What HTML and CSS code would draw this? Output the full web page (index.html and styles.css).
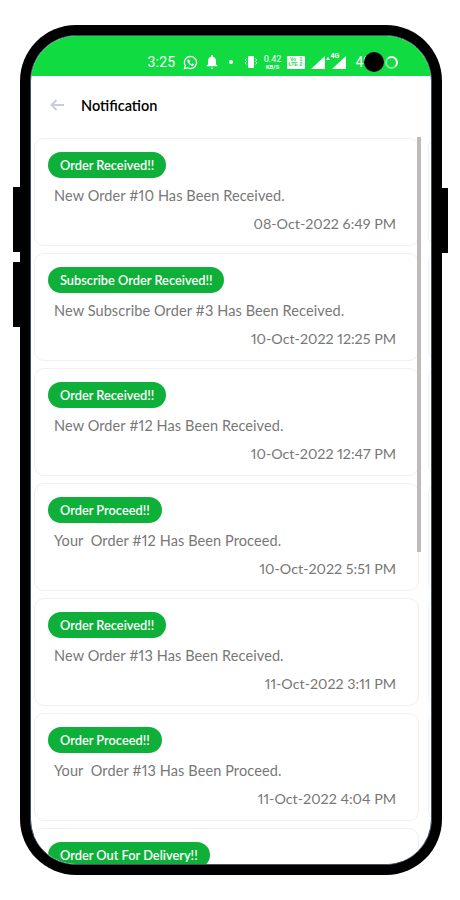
FILE: index.html

```html
<!DOCTYPE html>
<html lang="en">
<head>
    <meta charset="UTF-8">
    <meta name="viewport" content="width=device-width, initial-scale=1.0">
    <title>Notification</title>
    <link rel="stylesheet" href="styles.css">
</head>
<body>
    <div class="phone">
        <span class="side-btn vol-up"></span>
        <span class="side-btn vol-down"></span>
        <span class="side-btn power"></span>
        <span class="camera"></span>
        <div class="screen">
            <div class="status-bar">
                <span class="clock">3:25</span>
                <svg class="ic-wa" width="15" height="15" viewBox="0 0 24 24"><path d="M12 2.2a9.7 9.7 0 0 0-8.3 14.7L2.4 21.600l4.800-1.250A9.700 9.700 0 1 0 12 2.200z" fill="none" stroke="#fff" stroke-width="2"/><path d="M8.600 6.800c-.5 0-1.500.9-1.500 2.500 0 3 4.200 7.700 7.800 7.900 1.500 0 2.600-1 2.700-2.100 0-.4-2.200-1.600-2.600-1.500-.4.100-.9 1.200-1.300 1.200-1 0-3.400-2.200-3.500-3.200 0-.5.900-1 .9-1.400 0-.4-1.100-3.400-2.500-2.400z" fill="#fff"/></svg>
                <svg class="ic-bell" width="12" height="14" viewBox="0 0 12 14"><path d="M6 0c.6 0 1 .4 1 1v.7c1.800.4 3 2 3 3.900v3.600l1.500 1.500v.6H.5v-.6L2 9.200V5.600c0-1.900 1.200-3.500 3-3.900V1c0-.6.400-1 1-1zM4.700 12.700h2.600c0 .7-.6 1.300-1.300 1.300s-1.300-.6-1.300-1.300z" fill="#fff"/></svg>
                <span class="dot"></span>
                <svg class="ic-vib" width="14" height="14" viewBox="0 0 14 14"><rect x="4" y="1" width="6" height="12" rx="1" fill="#fff"/><path d="M2.500 3.500 1.200 5l1.300 1.500L1.200 8l1.300 1.500M11.500 3.500 12.800 5l-1.300 1.500L12.800 8l-1.300 1.500" fill="none" stroke="#fff" stroke-width=".8"/></svg>
                <span class="speed"><b>0.42</b><b class="unit">KB/S</b></span>
                <span class="volte"><i>Vo</i><i>1</i><i>LTE</i><i>2</i></span>
                <svg class="ic-sig" width="14" height="13" viewBox="0 0 14 13"><path d="M14 0v13H0z" fill="#fff"/></svg>
                <span class="sig-4g">
                    <svg width="14" height="13" viewBox="0 0 14 13"><path d="M14 0v13H0z" fill="#fff"/></svg>
                    <em>4G</em>
                    <u></u>
                </span>
                <span class="battery-num">49</span>
                <span class="ring"></span>
            </div>

            <header class="top-bar">
                <svg class="back" width="14" height="12" viewBox="0 0 14 12"><path d="M6.500 1 1.500 6l5 5M1.500 6H14" fill="none" stroke="#c9ccd9" stroke-width="2"/></svg>
                <h1>Notification</h1>
            </header>

            <div class="list">
                <div class="row">
                    <div class="card">
                        <span class="badge">Order Received!!</span>
                        <p class="msg">New Order #10 Has Been Received.</p>
                        <p class="date">08-Oct-2022 6:49 PM</p>
                    </div>
                    <div class="ghost"></div>
                </div>
                <div class="row">
                    <div class="card">
                        <span class="badge">Subscribe Order Received!!</span>
                        <p class="msg">New Subscribe Order #3 Has Been Received.</p>
                        <p class="date">10-Oct-2022 12:25 PM</p>
                    </div>
                    <div class="ghost"></div>
                </div>
                <div class="row">
                    <div class="card">
                        <span class="badge">Order Received!!</span>
                        <p class="msg">New Order #12 Has Been Received.</p>
                        <p class="date">10-Oct-2022 12:47 PM</p>
                    </div>
                    <div class="ghost"></div>
                </div>
                <div class="row">
                    <div class="card">
                        <span class="badge">Order Proceed!!</span>
                        <p class="msg">Your&nbsp; Order #12 Has Been Proceed.</p>
                        <p class="date">10-Oct-2022 5:51 PM</p>
                    </div>
                    <div class="ghost"></div>
                </div>
                <div class="row">
                    <div class="card">
                        <span class="badge">Order Received!!</span>
                        <p class="msg">New Order #13 Has Been Received.</p>
                        <p class="date">11-Oct-2022 3:11 PM</p>
                    </div>
                    <div class="ghost"></div>
                </div>
                <div class="row">
                    <div class="card">
                        <span class="badge">Order Proceed!!</span>
                        <p class="msg">Your&nbsp; Order #13 Has Been Proceed.</p>
                        <p class="date">11-Oct-2022 4:04 PM</p>
                    </div>
                    <div class="ghost"></div>
                </div>
                <div class="row">
                    <div class="card">
                        <span class="badge">Order Out For Delivery!!</span>
                    </div>
                    <div class="ghost"></div>
                </div>
                <span class="scroll-thumb"></span>
            </div>
        </div>
    </div>
</body>
</html>
```

FILE: styles.css

```css
* {
    box-sizing: border-box;
}
body {
    margin: 0;
    padding: 25px 0 0 20px;
    background-color: #fff;
    font-family: Lato, "Open Sans", sans-serif;
    font-variant-numeric: proportional-nums;
}
.phone {
    position: relative;
    width: 422px;
    height: 850px;
    background-color: #000;
    border-radius: 56px;
    padding: 10px;
}
.side-btn {
    position: absolute;
    background-color: #000;
    height: 65px;
}
.vol-up {
    left: -7px;
    top: 162px;
    width: 7px;
}
.vol-down {
    left: -7px;
    top: 237px;
    width: 7px;
}
.power {
    right: -6px;
    top: 163px;
    width: 6px;
}
.camera {
    position: absolute;
    left: 344px;
    top: 27px;
    width: 20px;
    height: 20px;
    border-radius: 50%;
    background-color: #000;
    z-index: 2;
}
.screen {
    height: 830px;
    background-color: #fff;
    border: 1.5px solid #44506a;
    border-radius: 46px;
    overflow: hidden;
}
.status-bar {
    height: 40.5px;
    margin-top: -0.5px;
    background-color: #10dc42;
    display: flex;
    align-items: center;
    padding: 13px 0 0 116.500px;
    color: #fff;
}
.clock {
    font-family: Roboto, sans-serif;
    font-size: 14px;
    width: 27px;
    letter-spacing: 0.2px;
}
.ic-wa {
    margin-left: 8px;
}
.ic-bell {
    margin-left: 8px;
}
.dot {
    width: 4px;
    height: 4px;
    margin-left: 11px;
    border-radius: 50%;
    background-color: #fff;
}
.ic-vib {
    margin-left: 11px;
}
.speed {
    margin-left: 6px;
    width: 18px;
    display: flex;
    flex-direction: column;
    align-items: center;
    font-family: Roboto, sans-serif;
    font-size: 9px;
    line-height: 9px;
}
.speed b {
    font-weight: 400;
}
.speed .unit {
    font-size: 6px;
    line-height: 6px;
    font-weight: 700;
}
.volte {
    margin-left: 5px;
    width: 18px;
    height: 13px;
    display: grid;
    grid-template-columns: 11px 1fr;
    padding: 1px;
    background-color: #fff;
    border-radius: 1px;
    font-family: "Liberation Sans", sans-serif;
    font-size: 5px;
    line-height: 5.500px;
    font-weight: 700;
    color: #10dc42;
    text-align: center;
}
.volte i {
    font-style: normal;
}
.ic-sig {
    margin-left: 6px;
}
.sig-4g {
    position: relative;
    margin-left: 1px;
    width: 20px;
    height: 13px;
    display: flex;
    justify-content: flex-end;
}
.sig-4g em {
    position: absolute;
    left: 5px;
    top: -3px;
    font-style: normal;
    font-family: Roboto, sans-serif;
    font-size: 7px;
    font-weight: 700;
    line-height: 7px;
}
.sig-4g u {
    position: absolute;
    left: 0;
    top: 1px;
    border: 2px solid transparent;
    border-top: 0;
    border-bottom: 3px solid #fff;
}
.battery-num {
    margin-left: 10px;
    width: 29px;
    font-family: Roboto, sans-serif;
    font-size: 14px;
}
.ring {
    width: 13px;
    height: 13px;
    border-radius: 50%;
    border: 2px solid #fff;
    border-left-color: #7eea99;
    border-bottom-color: #7eea99;
}
.top-bar {
    height: 62px;
    display: flex;
    align-items: center;
    padding: 0 0 4px 19px;
}
.top-bar h1 {
    margin: 0 0 0 17px;
    font-size: 14.500px;
    font-weight: 600;
    color: #000;
}
.list {
    position: relative;
}
.row {
    display: flex;
    gap: 9px;
    padding-left: 3px;
    margin-bottom: 7px;
}
.card {
    flex: 0 0 385px;
    height: 108px;
    padding: 13px 22px 0 13px;
    background-color: #fff;
    border: 1px solid #efefef;
    border-radius: 10px;
}
.ghost {
    flex: 0 0 30px;
    border: 1px solid #efefef;
    border-radius: 10px;
}
.badge {
    display: inline-block;
    height: 26px;
    line-height: 26px;
    padding: 0 12px;
    border-radius: 13px;
    background-color: #0fb03a;
    color: #fff;
    font-size: 12.800px;
    font-weight: 600;
}
.msg {
    margin: 9px 0 0 6px;
    font-size: 14.500px;
    line-height: 18px;
    letter-spacing: 0.1px;
    color: #777;
}
.date {
    margin: 10px 0 0;
    font-size: 14.300px;
    line-height: 18px;
    color: #777;
    text-align: right;
}
.scroll-thumb {
    position: absolute;
    left: 386px;
    top: -1px;
    width: 4px;
    height: 415px;
    background-color: #bbb;
}
```
